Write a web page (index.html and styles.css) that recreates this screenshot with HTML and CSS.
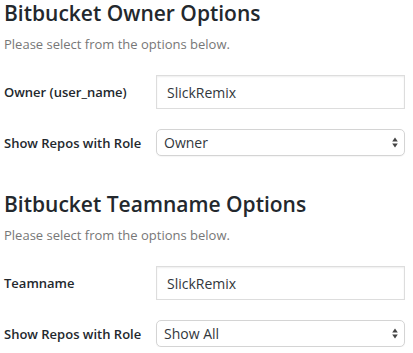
FILE: index.html
```html
<!DOCTYPE html>
<html lang="en">
<head>
    <meta charset="UTF-8">
    <meta name="viewport" content="width=device-width, initial-scale=1.0">
    <title>Bitbucket Options</title>
    <link rel="stylesheet" href="styles.css">
</head>
<body>
    <div class="wrap">
        <div class="section">
            <h2>Bitbucket Owner Options</h2>
            <p class="description">Please select from the options below.</p>
            <div class="form-row">
                <label for="owner">Owner (user_name)</label>
                <input type="text" id="owner" value="SlickRemix">
            </div>
            <div class="form-row">
                <label for="ownerRole">Show Repos with Role</label>
                <div class="select-wrap">
                    <select id="ownerRole">
                        <option>Owner</option>
                        <option>Admin</option>
                        <option>Member</option>
                        <option>Show All</option>
                    </select>
                    <svg class="select-arrows" width="6" height="11" viewBox="0 0 6 11">
                        <path d="M3 0.5 L5.8 4.5 L0.2 4.5 Z" />
                        <path d="M3 10.5 L5.8 6.5 L0.2 6.5 Z" />
                    </svg>
                </div>
            </div>
        </div>

        <div class="section">
            <h2>Bitbucket Teamname Options</h2>
            <p class="description">Please select from the options below.</p>
            <div class="form-row">
                <label for="team">Teamname</label>
                <input type="text" id="team" value="SlickRemix">
            </div>
            <div class="form-row">
                <label for="teamRole">Show Repos with Role</label>
                <div class="select-wrap">
                    <select id="teamRole">
                        <option>Owner</option>
                        <option>Admin</option>
                        <option>Member</option>
                        <option selected>Show All</option>
                    </select>
                    <svg class="select-arrows" width="6" height="11" viewBox="0 0 6 11">
                        <path d="M3 0.5 L5.8 4.5 L0.2 4.5 Z" />
                        <path d="M3 10.5 L5.8 6.5 L0.2 6.5 Z" />
                    </svg>
                </div>
            </div>
        </div>
    </div>
</body>
</html>
```

FILE: styles.css
```css
body {
    font-family: "Open Sans", Arial, sans-serif;
    margin: 0;
    padding: 0;
    background: #ffffff;
    color: #23282d;
}
.wrap {
    padding: 0 8px 0 4px;
}
.section {
    margin-bottom: 35px;
}
.section:last-child {
    margin-bottom: 0;
}
h2 {
    font-size: 21px;
    font-weight: 600;
    line-height: 26px;
    margin: 0 0 9px;
    color: #23282d;
}
.description {
    font-size: 13px;
    line-height: 18px;
    margin: 0 0 22px;
    color: #777;
}
.form-row {
    display: grid;
    grid-template-columns: 152px 1fr;
    align-items: center;
    margin-bottom: 20px;
}
.form-row:last-child {
    margin-bottom: 0;
}
label {
    font-size: 13px;
    font-weight: 600;
    color: #23282d;
}
input {
    box-sizing: border-box;
    width: 100%;
    height: 34px;
    margin: 0;
    padding: 0 10px;
    font-family: "Open Sans", Arial, sans-serif;
    font-size: 14px;
    color: #32373c;
    border: 1px solid #ddd;
    border-radius: 0;
    box-shadow: inset 0 1px 2px rgba(0, 0, 0, 0.07);
    outline: none;
}
.select-wrap {
    position: relative;
}
select {
    box-sizing: border-box;
    width: 100%;
    height: 27px;
    margin: 0;
    padding: 0 20px 0 7px;
    font-family: "Open Sans", Arial, sans-serif;
    font-size: 14px;
    color: #32373c;
    background: #fff;
    border: 1px solid #d4d4d4;
    border-radius: 5px;
    box-shadow: 0 1px 1px rgba(0, 0, 0, 0.04);
    appearance: none;
    -webkit-appearance: none;
    outline: none;
}
.select-arrows {
    position: absolute;
    right: 7px;
    top: 8px;
    fill: #444;
    pointer-events: none;
}
```
